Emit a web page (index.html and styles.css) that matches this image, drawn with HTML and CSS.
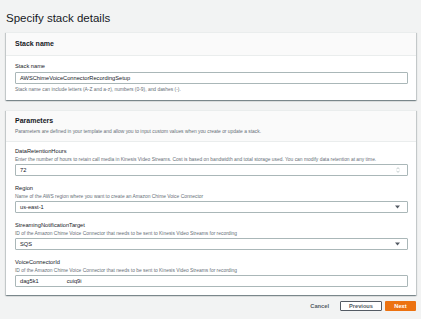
FILE: index.html
```html
<!DOCTYPE html>
<html lang="en">
<head>
    <meta charset="UTF-8">
    <title>Specify stack details</title>
    <link rel="stylesheet" href="styles.css">
</head>
<body>
<div class="page">
    <h1 class="title">Specify stack details</h1>

    <div class="panel">
        <div class="panel-header">
            <h2>Stack name</h2>
        </div>
        <div class="panel-body first">
            <div class="label">Stack name</div>
            <div class="input">AWSChimeVoiceConnectorRecordingSetup</div>
            <div class="help">Stack name can include letters (A-Z and a-z), numbers (0-9), and dashes (-).</div>
        </div>
    </div>

    <div class="panel">
        <div class="panel-header tall">
            <h2>Parameters</h2>
            <div class="help">Parameters are defined in your template and allow you to input custom values when you create or update a stack.</div>
        </div>
        <div class="panel-body">
            <div class="field">
                <div class="label">DataRetentionHours</div>
                <div class="desc">Enter the number of hours to retain call media in Kinesis Video Streams. Cost is based on bandwidth and total storage used. You can modify data retention at any time.</div>
                <div class="input">
                    <span>72</span>
                    <svg class="spinner" width="4" height="6" viewBox="0 0 4 6">
                        <path d="M0.5 2.3 L2 0.6 L3.5 2.3 M0.5 3.7 L2 5.4 L3.5 3.7" fill="none" stroke="#aab7b8" stroke-width="0.7"/>
                    </svg>
                </div>
            </div>
            <div class="field">
                <div class="label">Region</div>
                <div class="desc">Name of the AWS region where you want to create an Amazon Chime Voice Connector</div>
                <div class="input">
                    <span>us-east-1</span>
                    <svg class="caret" width="5" height="4" viewBox="0 0 5 4">
                        <path d="M0 0.5 H5 L2.5 3.5 Z" fill="#545b64"/>
                    </svg>
                </div>
            </div>
            <div class="field">
                <div class="label">StreamingNotificationTarget</div>
                <div class="desc">ID of the Amazon Chime Voice Connector that needs to be sent to Kinesis Video Streams for recording</div>
                <div class="input">
                    <span>SQS</span>
                    <svg class="caret" width="5" height="4" viewBox="0 0 5 4">
                        <path d="M0 0.5 H5 L2.5 3.5 Z" fill="#545b64"/>
                    </svg>
                </div>
            </div>
            <div class="field">
                <div class="label">VoiceConnectorId</div>
                <div class="desc">ID of the Amazon Chime Voice Connector that needs to be sent to Kinesis Video Streams for recording</div>
                <div class="input">
                    <span>dag5k1<span class="gap"></span>cuiq9i</span>
                </div>
            </div>
        </div>
    </div>

    <div class="actions">
        <span class="btn-link">Cancel</span>
        <span class="btn-normal">Previous</span>
        <span class="btn-primary">Next</span>
    </div>
</div>
</body>
</html>
```

FILE: styles.css
```css
body {
    margin: 0;
    background-color: #f2f3f3;
    font-family: "Liberation Sans", Arial, sans-serif;
    color: #16191f;
}

.page {
    padding: 11px 5px 0 6px;
}

.title {
    margin: 0 0 7px 0;
    font-size: 11.5px;
    line-height: 14px;
    font-weight: normal;
}

.panel {
    background-color: #ffffff;
    border-top: 1px solid #eaeded;
    box-shadow: 0 1px 1px 0 rgba(0, 28, 36, 0.3), 1px 1px 1px 0 rgba(0, 28, 36, 0.15), -1px 1px 1px 0 rgba(0, 28, 36, 0.15);
    margin-bottom: 10px;
}

.panel-header {
    background-color: #fafafa;
    border-bottom: 1px solid #eaeded;
    padding: 6px 9px 6px 9px;
}

.panel-header.tall {
    padding: 5px 9px 5px 9px;
}

.panel-header h2 {
    margin: 0;
    font-size: 7px;
    line-height: 10px;
    font-weight: bold;
}

.panel-header .help {
    margin-top: 2px;
}

.panel-body {
    padding: 4px 8px 8px 9px;
}

.panel-body.first {
    padding-top: 5px;
    padding-bottom: 6px;
}

.field {
    margin-bottom: 7px;
}

.field:last-child {
    margin-bottom: 0;
}

.label {
    font-size: 5.7px;
    line-height: 10px;
}

.desc, .help {
    font-size: 4.9px;
    line-height: 8px;
    color: #687078;
    white-space: nowrap;
}

.first .help {
    margin-top: 2px;
}

.input {
    display: flex;
    align-items: center;
    justify-content: space-between;
    height: 10px;
    border: 1px solid #aab7b8;
    border-radius: 1px;
    padding: 0 7px 0 4px;
    font-size: 5.7px;
    line-height: 10px;
    background-color: #ffffff;
}

.first .input {
    margin-top: 1px;
}

.gap {
    display: inline-block;
    width: 28px;
}

.actions {
    display: flex;
    justify-content: flex-end;
    align-items: center;
    margin-top: -4px;
}

.actions span {
    height: 10px;
    line-height: 10px;
    font-size: 5.7px;
    font-weight: bold;
    box-sizing: border-box;
}

.btn-link {
    color: #545b64;
    margin-right: 11px;
}

.btn-normal {
    width: 42px;
    text-align: center;
    color: #545b64;
    background-color: #ffffff;
    border: 1px solid #545b64;
    line-height: 8px !important;
    margin-right: 3px;
    border-radius: 1px;
}

.btn-primary {
    width: 31px;
    text-align: center;
    color: #ffffff;
    background-color: #ec7211;
    border-radius: 1px;
}
```
